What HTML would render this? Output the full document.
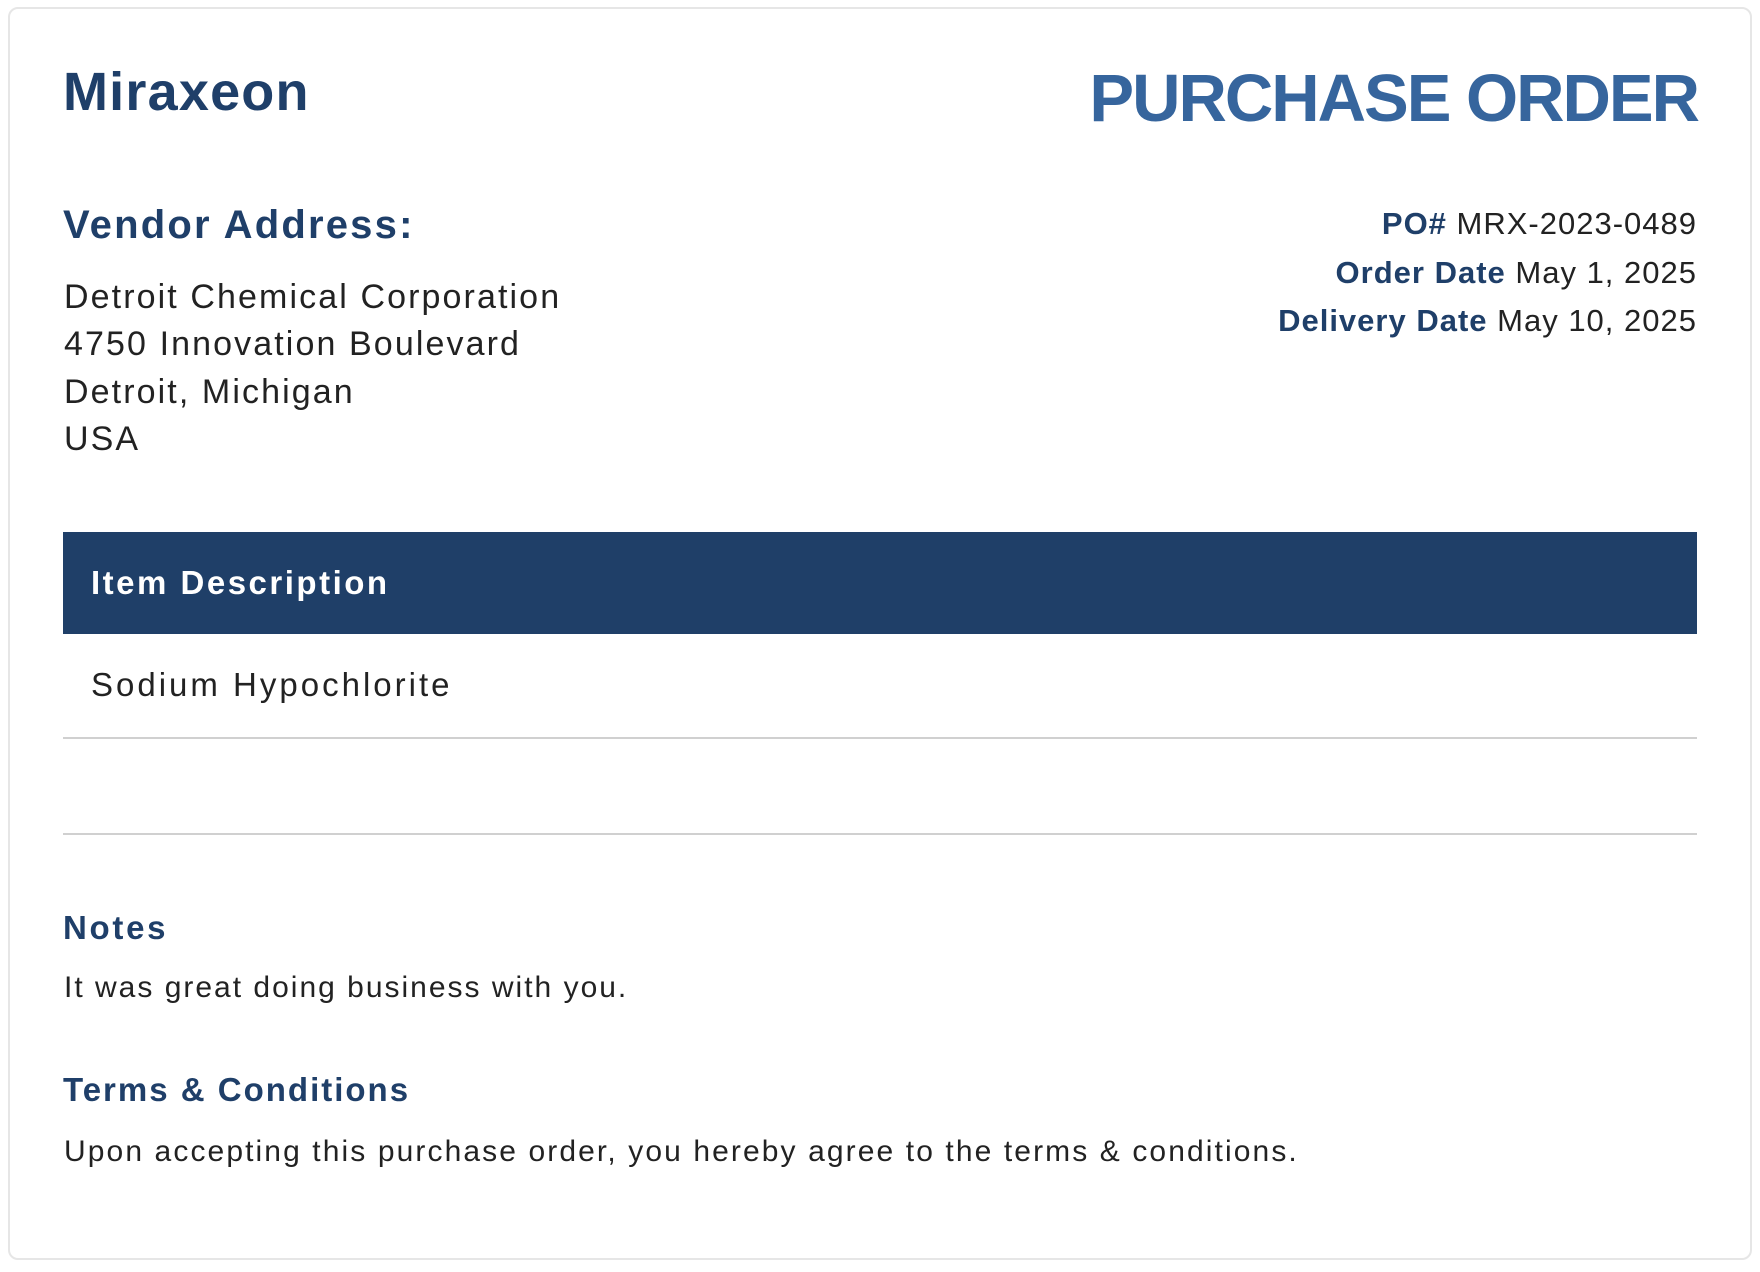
<!DOCTYPE html>
<html><head><meta charset="utf-8"><style>
*{margin:0;padding:0;box-sizing:border-box}
body{width:1760px;height:1272px;background:#fff;font-family:"Liberation Sans",sans-serif;color:#222;position:relative;overflow:hidden}
.card{position:absolute;left:8px;top:7px;width:1744px;height:1253px;border:2px solid #e6e6e6;border-radius:10px}
.a{position:absolute;white-space:nowrap}
.navy{color:#1f3f69;font-weight:bold}
.r{right:64px;text-align:right}
</style></head><body>
<div class="card"></div>
<div class="a navy" style="left:63px;top:60px;font-size:54px;line-height:64px;letter-spacing:1.2px">Miraxeon</div>
<div class="a r" style="top:60px;font-size:67px;line-height:78px;font-weight:bold;color:#36659d;letter-spacing:-2px;right:62px">PURCHASE ORDER</div>
<div class="a navy" style="left:63px;top:202px;font-size:40px;line-height:46px;letter-spacing:2.2px">Vendor Address:</div>
<div class="a" style="left:64px;top:274px;font-size:34px;line-height:47.3px;letter-spacing:2.1px">Detroit Chemical Corporation<br>4750 Innovation Boulevard<br>Detroit, Michigan<br>USA</div>
<div class="a r" style="top:200px;font-size:31px;line-height:48.5px;letter-spacing:1px;right:63px"><span class="navy">PO#</span> MRX-2023-0489<br><span class="navy">Order Date</span> May 1, 2025<br><span class="navy">Delivery Date</span> May 10, 2025</div>
<div class="a" style="left:63px;top:532px;width:1634px;height:102px;background:#1f3f68"></div>
<div class="a" style="left:91px;top:564px;font-size:33px;line-height:38px;color:#fff;font-weight:bold;letter-spacing:2.5px">Item Description</div>
<div class="a" style="left:91px;top:665px;font-size:33px;line-height:40px;letter-spacing:3px">Sodium Hypochlorite</div>
<div class="a" style="left:63px;top:737px;width:1634px;height:2px;background:#d0d0d0"></div>
<div class="a" style="left:63px;top:833px;width:1634px;height:2px;background:#d0d0d0"></div>
<div class="a navy" style="left:63px;top:909px;font-size:33px;line-height:38px;letter-spacing:2.7px">Notes</div>
<div class="a" style="left:64px;top:970px;font-size:30px;line-height:36px;letter-spacing:2px">It was great doing business with you.</div>
<div class="a navy" style="left:63px;top:1071px;font-size:33px;line-height:38px;letter-spacing:2px">Terms &amp; Conditions</div>
<div class="a" style="left:64px;top:1134px;font-size:30px;line-height:36px;letter-spacing:2.1px">Upon accepting this purchase order, you hereby agree to the terms &amp; conditions.</div>
</body></html>
